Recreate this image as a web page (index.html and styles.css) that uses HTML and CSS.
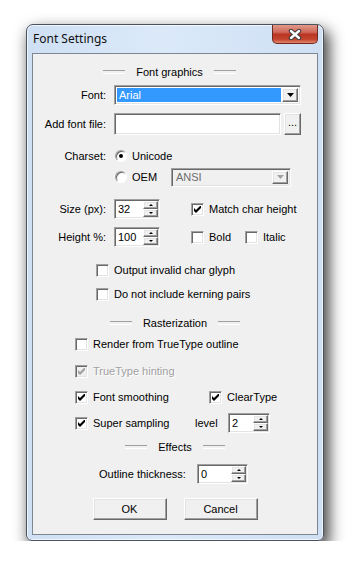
FILE: index.html
```html
<!DOCTYPE html>
<html lang="en">

<head>
    <meta charset="UTF-8">
    <meta name="viewport" content="width=device-width, initial-scale=1.0">
    <title>Font Settings</title>
    <link rel="stylesheet" href="styles.css">
</head>

<body>
    <div class="window">
        <div class="titlebar">
            <span class="title">Font Settings</span>
            <button type="button" class="close-btn">
                <svg width="14" height="11" viewBox="0 0 14 11">
                    <path d="M3 2L11 9M11 2L3 9" stroke="#3b3b3b" stroke-width="4.4" stroke-linecap="round" fill="none" />
                    <path d="M3 2L11 9M11 2L3 9" stroke="#fff" stroke-width="2.4" stroke-linecap="round" fill="none" />
                </svg>
            </button>
        </div>

        <div class="client">
            <div class="group-title first mt11"><span>Font graphics</span></div>

            <div class="field mt6">
                <label>Font:</label>
                <div class="combo font-combo sunken">
                    <span class="combo-text selected">Arial</span>
                    <span class="combo-btn raised"><svg width="7" height="4" viewBox="0 0 7 4"><path d="M0 0h7L3.5 4z" /></svg></span>
                </div>
            </div>

            <div class="field mt8">
                <label>Add font file:</label>
                <div class="file-row">
                    <div class="edit file-edit sunken"></div>
                    <button type="button" class="browse-btn raised">...</button>
                </div>
            </div>

            <div class="field radio-row mt13">
                <label>Charset:</label>
                <div class="option">
                    <span class="radio on"></span>Unicode
                </div>
            </div>

            <div class="field combo-row mt3">
                <span></span>
                <div class="oem-row">
                    <div class="option oem"><span class="radio"></span>OEM</div>
                    <div class="combo ansi-combo sunken disabled">
                        <span class="combo-text">ANSI</span>
                        <span class="combo-btn raised"><svg width="7" height="4" viewBox="0 0 7 4"><path d="M0 0h7L3.5 4z" /></svg></span>
                    </div>
                </div>
            </div>

            <div class="field spin-row mt12">
                <label>Size (px):</label>
                <div class="spin-line">
                    <div class="spin size-spin sunken">
                        <span class="spin-value">32</span>
                        <span class="updown"><span class="up raised"></span><span class="down raised"></span></span>
                    </div>
                    <div class="check"><span class="box"><svg width="7" height="7" viewBox="0 0 7 7"><path d="M0 2L2 4L6 0H7V2L2 7L0 5Z" /></svg></span>Match char height</div>
                </div>
            </div>

            <div class="field spin-row mt8">
                <label>Height %:</label>
                <div class="spin-line">
                    <div class="spin size-spin sunken">
                        <span class="spin-value">100</span>
                        <span class="updown"><span class="up raised"></span><span class="down raised"></span></span>
                    </div>
                    <div class="check bold-check"><span class="box"></span>Bold</div>
                    <div class="check"><span class="box"></span>Italic</div>
                </div>
            </div>

            <div class="check-row indent-wide mt15">
                <div class="check"><span class="box"></span>Output invalid char glyph</div>
            </div>
            <div class="check-row indent-wide mt8">
                <div class="check"><span class="box"></span>Do not include kerning pairs</div>
            </div>

            <div class="group-title mt14"><span>Rasterization</span></div>

            <div class="check-row mt6">
                <div class="check"><span class="box"></span>Render from TrueType outline</div>
            </div>
            <div class="check-row mt11">
                <div class="check disabled"><span class="box"><svg width="7" height="7" viewBox="0 0 7 7"><path d="M0 2L2 4L6 0H7V2L2 7L0 5Z" /></svg></span>TrueType hinting</div>
            </div>
            <div class="check-row mt10">
                <div class="check smoothing"><span class="box"><svg width="7" height="7" viewBox="0 0 7 7"><path d="M0 2L2 4L6 0H7V2L2 7L0 5Z" /></svg></span>Font smoothing</div>
                <div class="check"><span class="box"><svg width="7" height="7" viewBox="0 0 7 7"><path d="M0 2L2 4L6 0H7V2L2 7L0 5Z" /></svg></span>ClearType</div>
            </div>
            <div class="check-row spin-check-row mt8">
                <div class="check sampling"><span class="box"><svg width="7" height="7" viewBox="0 0 7 7"><path d="M0 2L2 4L6 0H7V2L2 7L0 5Z" /></svg></span>Super sampling</div>
                <span class="level">level</span>
                <div class="spin level-spin sunken">
                    <span class="spin-value">2</span>
                    <span class="updown"><span class="up raised"></span><span class="down raised"></span></span>
                </div>
            </div>

            <div class="group-title mt7"><span>Effects</span></div>

            <div class="outline-row mt10">
                <span class="outline-label">Outline thickness:</span>
                <div class="spin outline-spin sunken">
                    <span class="spin-value">0</span>
                    <span class="updown"><span class="up raised"></span><span class="down raised"></span></span>
                </div>
            </div>

            <div class="buttons mt14">
                <button type="button" class="btn raised">OK</button>
                <button type="button" class="btn raised">Cancel</button>
            </div>
        </div>
    </div>
</body>

</html>
```
FILE: styles.css
```css
* {
    box-sizing: border-box;
}

body {
    margin: 0;
    background: #fff;
    font-family: "Liberation Sans", Arial, sans-serif;
    font-size: 11px;
    color: #000;
}

/* window frame */
.window {
    width: 298px;
    height: 517px;
    margin: 24px 0 0 26px;
    padding: 0 5px 5px;
    display: flex;
    flex-direction: column;
    border: 1px solid #4a5260;
    border-radius: 7px 7px 6px 6px;
    background: linear-gradient(to right, #cfe0f4, #dbe9f9 45%, #cfe0f4);
    box-shadow: inset 0 0 0 1px rgba(255, 255, 255, 0.7), 4px 7px 15px 1px rgba(0, 0, 0, 0.75);
}

.titlebar {
    height: 28px;
    display: flex;
    justify-content: space-between;
    align-items: flex-start;
    flex: none;
}

.title {
    font-family: "Noto Sans", sans-serif;
    font-size: 12px;
    line-height: 27px;
    padding-left: 1px;
    color: #111;
}

.close-btn {
    width: 46px;
    height: 19px;
    padding: 0;
    margin: 0;
    border: 1px solid #6e2a22;
    border-top: none;
    border-radius: 0 0 5px 5px;
    background: linear-gradient(#e09a8a, #d0675a 40%, #b93522 52%, #c44530 80%, #e3876c);
    display: flex;
    align-items: center;
    justify-content: center;
}

.client {
    flex: 1;
    background: #f0f0f0;
    border: 1px solid #7d8793;
}

/* 3D borders */
.sunken {
    border: 1px solid;
    border-color: #a0a0a0 #fff #fff #a0a0a0;
    box-shadow: inset 1px 1px #696969, inset -1px -1px #e3e3e3;
}

.raised {
    border: 1px solid;
    border-color: #fff #696969 #696969 #fff;
    box-shadow: inset -1px -1px #a0a0a0, inset 1px 1px #e3e3e3;
    background: #f0f0f0;
}

.mt3 { margin-top: 3px; }
.mt6 { margin-top: 6px; }
.mt7 { margin-top: 7px; }
.mt8 { margin-top: 8px; }
.mt10 { margin-top: 10px; }
.mt11 { margin-top: 11px; }
.mt12 { margin-top: 12px; }
.mt13 { margin-top: 13px; }
.mt14 { margin-top: 14px; }
.mt15 { margin-top: 15px; }

/* section headings */
.group-title {
    height: 14px;
    display: flex;
    justify-content: center;
    align-items: center;
    gap: 11px;
}

.group-title::before,
.group-title::after {
    content: "";
    width: 22px;
    height: 2px;
    border-top: 1px solid #a0a0a0;
    border-bottom: 1px solid #fff;
}

.group-title.first {
    margin-right: 11px;
}

/* label + control rows */
.field {
    display: grid;
    grid-template-columns: 73px auto;
    column-gap: 8px;
    align-items: center;
}

.field label {
    text-align: right;
}

.combo {
    height: 20px;
    display: flex;
    padding: 2px;
    background: #fff;
}

.font-combo {
    width: 187px;
}

.combo-text {
    flex: 1;
    line-height: 14px;
    padding-left: 2px;
    margin: 0 1px 0 0;
}

.combo-text.selected {
    background: #3399ff;
    color: #fff;
}

.combo-btn {
    width: 16px;
    display: flex;
    align-items: center;
    justify-content: center;
}

.combo.disabled {
    background: #f0f0f0;
    color: #6d6d6d;
}

.combo.disabled .combo-btn svg {
    fill: #a0a0a0;
}

.ansi-combo {
    width: 120px;
    height: 19px;
}

.ansi-combo .combo-text {
    line-height: 13px;
}

.file-row {
    display: flex;
    gap: 3px;
}

.file-edit {
    width: 167px;
    height: 22px;
    background: #fff;
}

.browse-btn {
    width: 17px;
    height: 22px;
    padding: 0 0 4px;
    font-family: inherit;
    font-size: 11px;
    color: #000;
}

/* radios */
.option {
    display: flex;
    align-items: center;
    gap: 5px;
    height: 16px;
    padding-left: 1px;
}

.radio {
    width: 12px;
    height: 12px;
    border-radius: 50%;
    background: #fff;
    border: 1px solid;
    border-color: #a0a0a0 #fff #fff #a0a0a0;
    box-shadow: inset 1px 1px #696969;
    position: relative;
}

.radio.on::after {
    content: "";
    position: absolute;
    left: 3px;
    top: 3px;
    width: 4px;
    height: 4px;
    border-radius: 50%;
    background: #000;
}

.combo-row {
    height: 20px;
}

.oem-row {
    display: flex;
    align-items: center;
}

.oem {
    width: 57px;
}

/* spin edits */
.spin-row {
    height: 20px;
}

.spin-line {
    display: flex;
    align-items: center;
}

.spin-line .spin {
    margin-right: 31px;
}

.spin {
    height: 20px;
    display: flex;
    background: #fff;
    padding: 1px 1px 1px 2px;
}

.spin-value {
    flex: 1;
    line-height: 16px;
    padding-left: 1px;
}

.size-spin {
    width: 46px;
}

.level-spin {
    width: 42px;
}

.outline-spin {
    width: 51px;
}

.updown {
    width: 15px;
    display: flex;
    flex-direction: column;
}

.updown span {
    flex: 1;
    display: flex;
    align-items: center;
    justify-content: center;
}

.updown .up::before,
.updown .down::before {
    content: "";
    border: 2px solid transparent;
}

.updown .up::before {
    border-top: 0;
    border-bottom-color: #000;
}

.updown .down::before {
    border-bottom: 0;
    border-top-color: #000;
}

/* checkboxes */
.check {
    display: flex;
    align-items: center;
    gap: 5px;
    height: 16px;
    white-space: nowrap;
}

.box {
    width: 13px;
    height: 13px;
    flex: none;
    background: #fff;
    border: 1px solid;
    border-color: #a0a0a0 #fff #fff #a0a0a0;
    box-shadow: inset 1px 1px #696969, inset -1px -1px #e3e3e3;
    display: flex;
    align-items: center;
    justify-content: center;
}

.check.disabled {
    color: #a0a0a0;
    text-shadow: 1px 1px #fff;
}

.check.disabled .box {
    background: #f0f0f0;
}

.check.disabled svg {
    fill: #a0a0a0;
}

.bold-check {
    width: 54px;
}

.check-row {
    display: flex;
    align-items: center;
    padding-left: 42px;
}

.check-row.indent-wide {
    padding-left: 63px;
}

.smoothing {
    width: 134px;
}

.spin-check-row {
    height: 20px;
}

.sampling {
    width: 120px;
}

.level {
    width: 33px;
}

.outline-row {
    height: 20px;
    display: flex;
    align-items: center;
    gap: 15px;
    padding-left: 66px;
}

.outline-label {
    width: 83px;
    white-space: nowrap;
}

/* dialog buttons */
.buttons {
    display: flex;
    justify-content: center;
    gap: 17px;
}

.btn {
    width: 74px;
    height: 22px;
    padding: 0;
    font-family: inherit;
    font-size: 11px;
    color: #000;
}
```
